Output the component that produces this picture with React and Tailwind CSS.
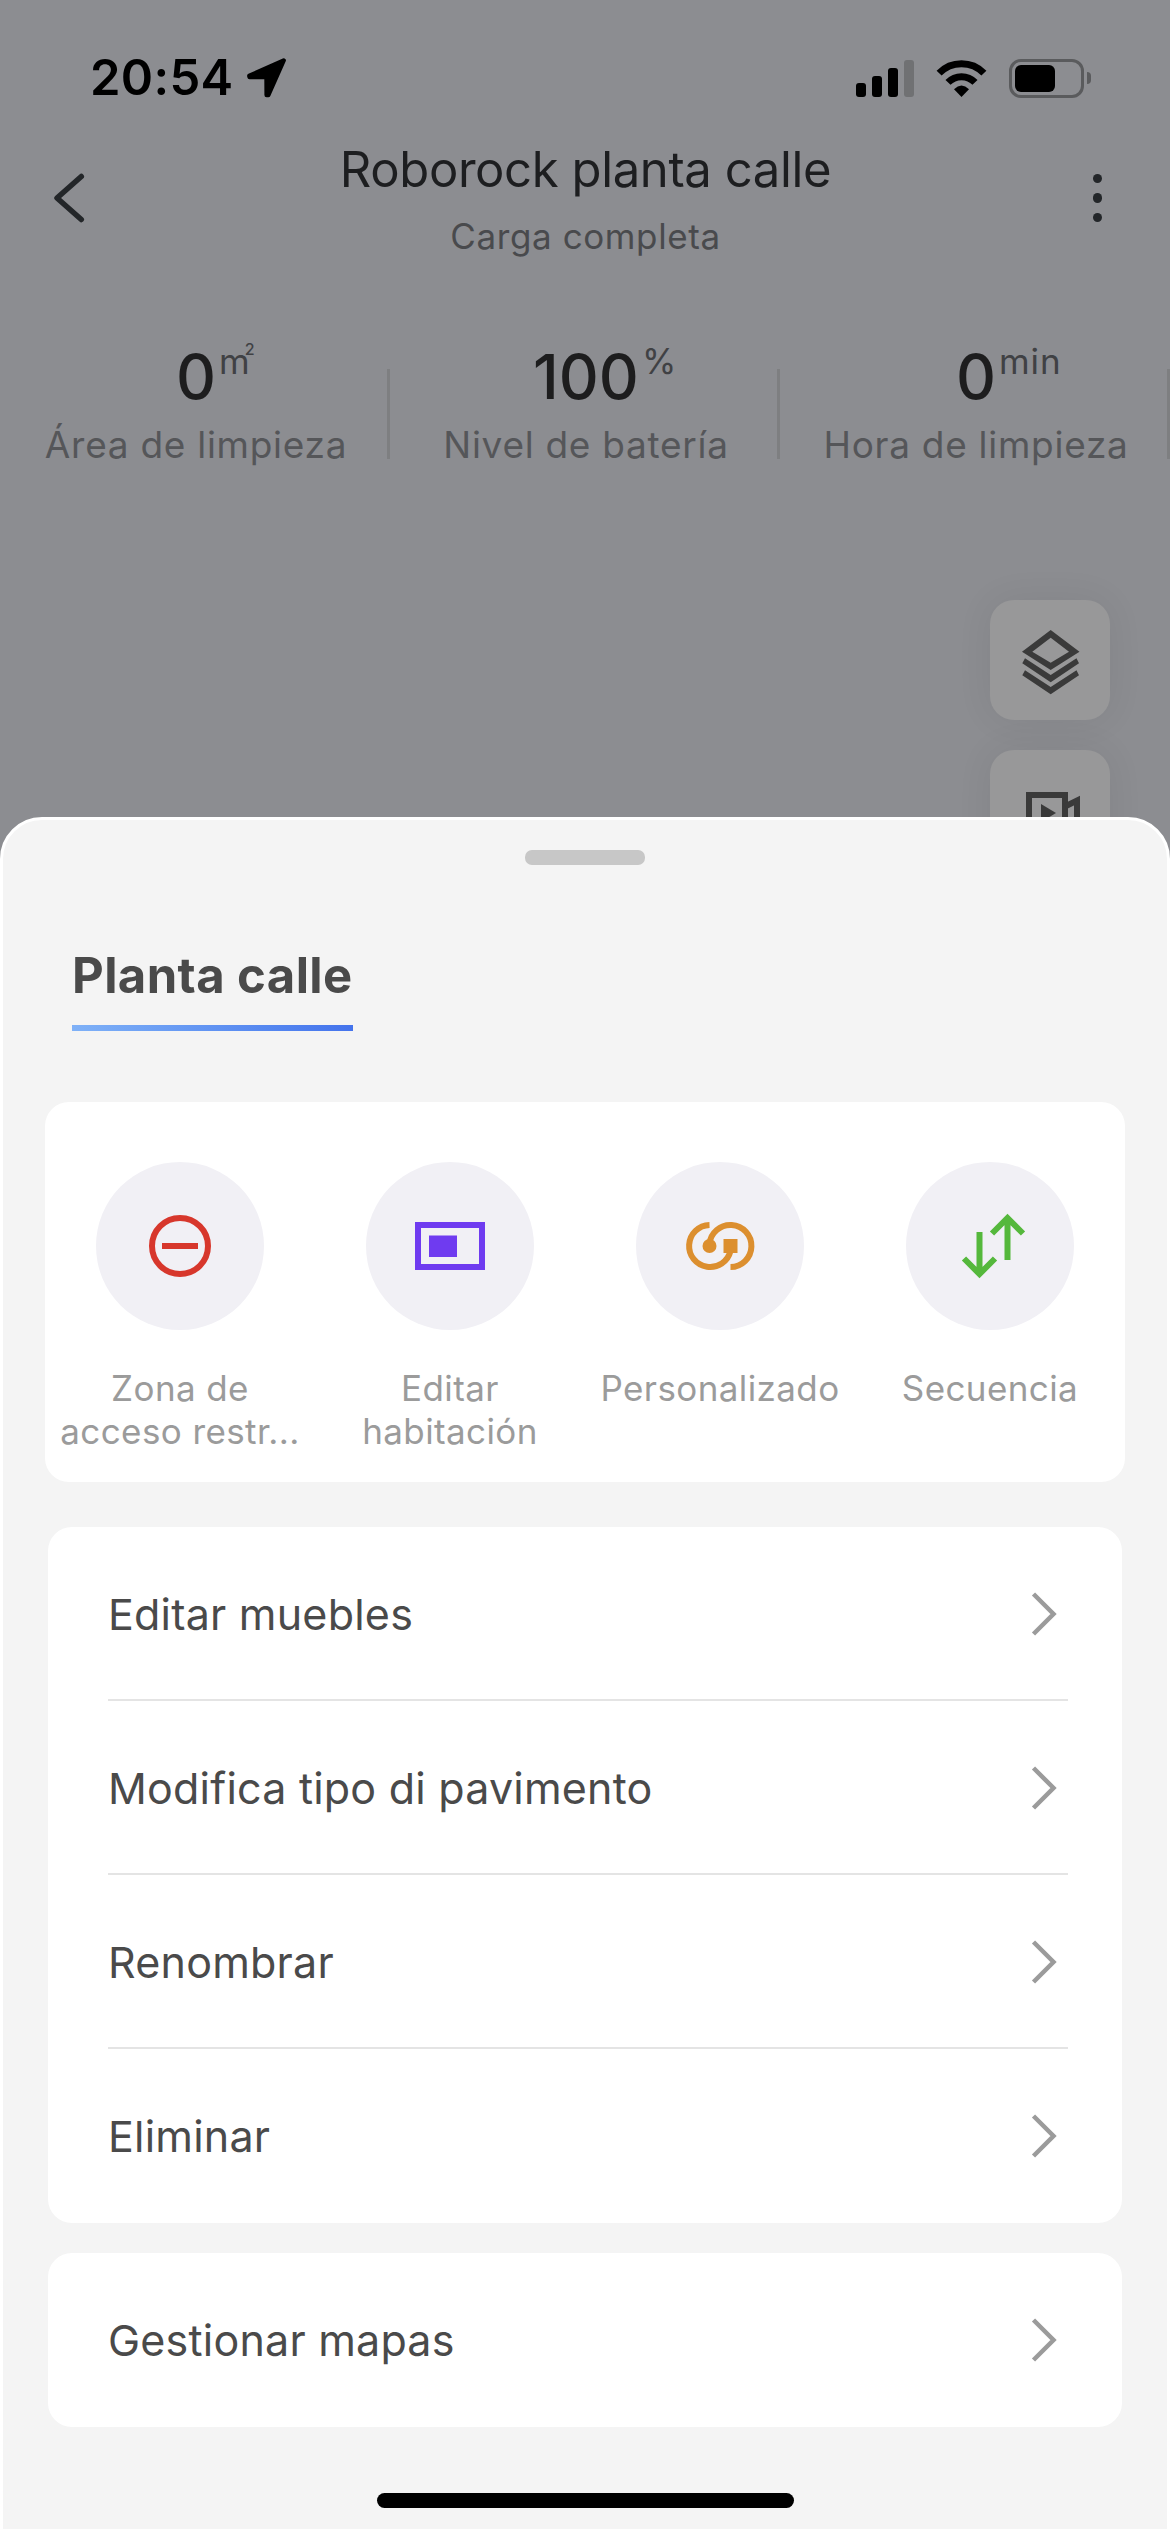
import { memo } from "react";

const STATS = [
  { value: "0", unit: "m", sup: "2", label: "Área de limpieza" },
  { value: "100", unit: "%", label: "Nivel de batería" },
  { value: "0", unit: "min", label: "Hora de limpieza" },
];

const NoGoIcon = () => (
  <svg width="72" height="72" viewBox="0 0 72 72" fill="none" stroke="#d7372c" strokeWidth="6">
    <circle cx="36" cy="36" r="28" />
    <path d="M18 36h36" />
  </svg>
);

const RoomIcon = () => (
  <svg width="72" height="72" viewBox="0 0 72 72" fill="none">
    <rect x="4" y="15" width="64" height="42" stroke="#6f3bf0" strokeWidth="6" />
    <rect x="15" y="25.5" width="28" height="21.5" fill="#6f3bf0" />
  </svg>
);

const CustomIcon = () => (
  <svg width="72" height="72" viewBox="0 0 72 72" fill="none" stroke="#dc8f2f" strokeWidth="6">
    <path d="M25.5 15a21 21 0 1 0 21 26" />
    <path d="M46.5 57a21 21 0 1 0-21-23" />
    <circle cx="25.5" cy="36" r="7" fill="#dc8f2f" stroke="none" />
    <rect x="39.5" y="29" width="14" height="14" fill="#dc8f2f" stroke="none" />
  </svg>
);

const SequenceIcon = () => (
  <svg width="72" height="72" viewBox="0 0 72 72" fill="none" stroke="#55b83c" strokeWidth="6">
    <path d="M25.5 22v41M10 48.5L25.5 64L41 48.5" />
    <path d="M53.5 50V9M38 23.5L53.5 8L69 23.5" />
  </svg>
);

const ACTIONS = [
  { label: "Zona de\nacceso restr...", Icon: NoGoIcon },
  { label: "Editar\nhabitación", Icon: RoomIcon },
  { label: "Personalizado", Icon: CustomIcon },
  { label: "Secuencia", Icon: SequenceIcon },
];

const MAP_OPTIONS = [
  "Editar muebles",
  "Modifica tipo di pavimento",
  "Renombrar",
  "Eliminar",
];

const StatusBar = () => (
  <div className="flex h-[108px] items-center justify-between pt-12 pr-[79px] pl-[90px] text-black">
    <div className="flex items-center">
      <span className="text-[49px] leading-[60px] font-semibold tracking-[0.3px]">20:54</span>
      <svg className="ml-[14px]" width="40" height="40" viewBox="0 0 40 40">
        <path
          d="M36.7 2.4L2.3 17.8L2.5 19H19.5L19.6 37H21.3Z"
          fill="currentColor"
          stroke="currentColor"
          strokeWidth="4.4"
          strokeLinejoin="round"
        />
      </svg>
    </div>
    <div className="flex items-center">
      <div className="flex h-[37px] items-end gap-[6px]">
        <span className="h-[14px] w-[10px] rounded-[3px] bg-black" />
        <span className="h-[21px] w-[10px] rounded-[3px] bg-black" />
        <span className="h-[29px] w-[10px] rounded-[3px] bg-black" />
        <span className="h-[37px] w-[10px] rounded-[3px] bg-[#707173]" />
      </div>
      <svg className="ml-[22px]" width="51" height="37" viewBox="0 0 51 37" fill="none">
        <path d="M3.1 13.1a31.3 31.3 0 0 1 44.8 0" stroke="currentColor" strokeWidth="7" />
        <path d="M12 22.4a18.7 18.7 0 0 1 27 0" stroke="currentColor" strokeWidth="7" />
        <path d="M25.5 37L18 29.2Q25.5 22 33 29.2Z" fill="currentColor" />
      </svg>
      <div className="ml-[22px] flex h-[39px] w-[75px] items-center rounded-[12px] border-[3px] border-[#5a5b5d] pl-[3px]">
        <span className="h-[27px] w-[40px] rounded-[6px] bg-black" />
      </div>
      <span className="ml-[3px] h-[12px] w-[4px] rounded-r-full bg-[#5a5b5d]" />
    </div>
  </div>
);

const NavBar = () => (
  <div className="mt-[30px] flex h-[120px] items-center justify-between pr-[67px] pl-[50px]">
    <svg width="40" height="56" viewBox="0 0 40 56" fill="none">
      <path
        d="M31.3 6.5L7 28L31.3 49.5"
        stroke="#232629"
        strokeWidth="5.5"
        strokeLinecap="round"
        strokeLinejoin="round"
      />
    </svg>
    <div className="flex flex-col items-center pt-[3px] pr-[12px]">
      <h1 className="text-[49px] leading-[56px] tracking-[-0.39px] text-[#1d1e20]">
        Roborock planta calle
      </h1>
      <p className="mt-[16px] text-[35px] leading-[44px] tracking-[0.6px] text-[#494a4d]">
        Carga completa
      </p>
    </div>
    <div className="flex w-[10px] flex-col gap-[10px]">
      <span className="size-[9.5px] rounded-full bg-[#232629]" />
      <span className="size-[9.5px] rounded-full bg-[#232629]" />
      <span className="size-[9.5px] rounded-full bg-[#232629]" />
    </div>
  </div>
);

const Stat = ({ value, unit, sup, label }) => (
  <div className="flex w-[390px]">
    <div className="flex flex-1 flex-col items-center pl-[5px]">
      <div className="relative text-[62px] leading-[64px] font-medium text-[#1d1d1e]">
        {value}
        <span className="absolute -top-[6px] left-full ml-[3px] text-[35px] leading-[44px] font-normal tracking-[0.9px] text-[#404144]">
          {unit}
          {sup && (
            <span className="absolute top-0 right-[-5px] text-[16px] leading-[20px] font-medium">
              {sup}
            </span>
          )}
        </span>
      </div>
      <p className="mt-[14px] text-[37px] leading-[44px] tracking-[0.72px] text-[#555659]">
        {label}
      </p>
    </div>
    <span className="mt-[24px] h-[90px] w-[3px] bg-[#7e7f81]" />
  </div>
);

const MapButton = ({ children }) => (
  <button className="flex size-[120px] items-center justify-center rounded-[24px] bg-[#989899] shadow-[0_0_36px_rgba(0,0,0,0.07)]">
    {children}
  </button>
);

const ListRow = memo(({ label, divided }) => (
  <div
    className={
      divided
        ? "flex h-[174px] items-center justify-between border-b-2 border-[#e4e4e4] pt-[2px]"
        : "flex h-[174px] items-center justify-between"
    }
  >
    <span className="text-[43px] leading-[54px] tracking-[0.22px] text-[#4a4a4a]">{label}</span>
    <svg className="mr-[11px]" width="26" height="46" viewBox="0 0 26 46" fill="none">
      <path d="M2.5 3L22.5 23L2.5 43" stroke="#9b9b9b" strokeWidth="4.5" />
    </svg>
  </div>
));

const App = () => {
  return (
    <div className="relative h-[2532px] w-[1170px] overflow-hidden bg-[#8c8d91] font-['Inter',sans-serif]">
      <StatusBar />
      <NavBar />

      <div className="mt-[87px] flex">
        {STATS.map((stat) => (
          <Stat key={stat.label} {...stat} />
        ))}
      </div>

      {/* Map tools, partly hidden behind the sheet */}
      <div className="mt-[133px] flex flex-col items-end gap-[30px] pr-[60px]">
        <MapButton>
          <svg width="62" height="70" viewBox="0 0 62 70" fill="#3a3a3a" className="mb-[-6px] ml-[2px]">
            <path
              fillRule="evenodd"
              d="M30.7 2L59.5 23.7L30.7 42L2 23.7ZM30.7 9.7L12.3 23.7L30.7 34.7L49 23.7Z"
            />
            <path d="M5 30.3L30.7 47L56.5 30.3L59 35.2L30.7 54.3L2.3 35.2Z" />
            <path d="M5 42.3L30.7 59L56.5 42.3L59 47.2L30.7 66.3L2.3 47.2Z" />
          </svg>
        </MapButton>
        <MapButton>
          <svg width="66" height="54" viewBox="0 0 66 54" fill="none" className="mt-[6px] ml-[6px]">
            <path d="M9 9H45V51H9Z" stroke="#3a3a3a" strokeWidth="6" />
            <path d="M45 20.5L57 14.5V45L45 39" stroke="#3a3a3a" strokeWidth="6" />
            <path d="M21 18L36 27L21 36Z" fill="#3a3a3a" />
          </svg>
        </MapButton>
      </div>

      {/* Bottom sheet */}
      <div className="absolute inset-x-0 bottom-0 flex h-[1715px] flex-col rounded-t-[42px] border-[3px] border-white bg-[#f4f4f4] pt-[30px]">
        <div className="h-[15px] w-[120px] self-center rounded-[7px] bg-[#c7c7c7]" />

        <div className="mt-[81px] ml-[69px] self-start">
          <h2 className="text-[49px] leading-[60px] font-bold tracking-[0.41px] text-[#4a4a4a]">
            Planta calle
          </h2>
          <div className="mt-[19px] h-[6px] bg-linear-to-r from-[#7fb1f7] to-[#4473ec]" />
        </div>

        <div className="mx-[42px] mt-[71px] grid h-[380px] shrink-0 grid-cols-4 rounded-[24px] bg-white pt-[60px]">
          {ACTIONS.map(({ label, Icon }) => (
            <div key={label} className="flex flex-col items-center">
              <div className="flex size-[168px] items-center justify-center rounded-full bg-[#f1f0f5]">
                <Icon />
              </div>
              <p className="mt-[37px] text-center text-[35px] leading-[43px] tracking-[0.4px] whitespace-pre-line text-[#9b9b9b]">
                {label}
              </p>
            </div>
          ))}
        </div>

        <div className="mx-[45px] mt-[45px] rounded-[24px] bg-white pr-[54px] pl-[60px]">
          {MAP_OPTIONS.map((label, i) => (
            <ListRow key={label} label={label} divided={i < MAP_OPTIONS.length - 1} />
          ))}
        </div>

        <div className="mx-[45px] mt-[30px] rounded-[24px] bg-white pr-[54px] pl-[60px]">
          <ListRow label="Gestionar mapas" />
        </div>

        <div className="mt-[66px] h-[15px] w-[417px] self-center rounded-full bg-black" />
      </div>
    </div>
  );
};

export default App;
